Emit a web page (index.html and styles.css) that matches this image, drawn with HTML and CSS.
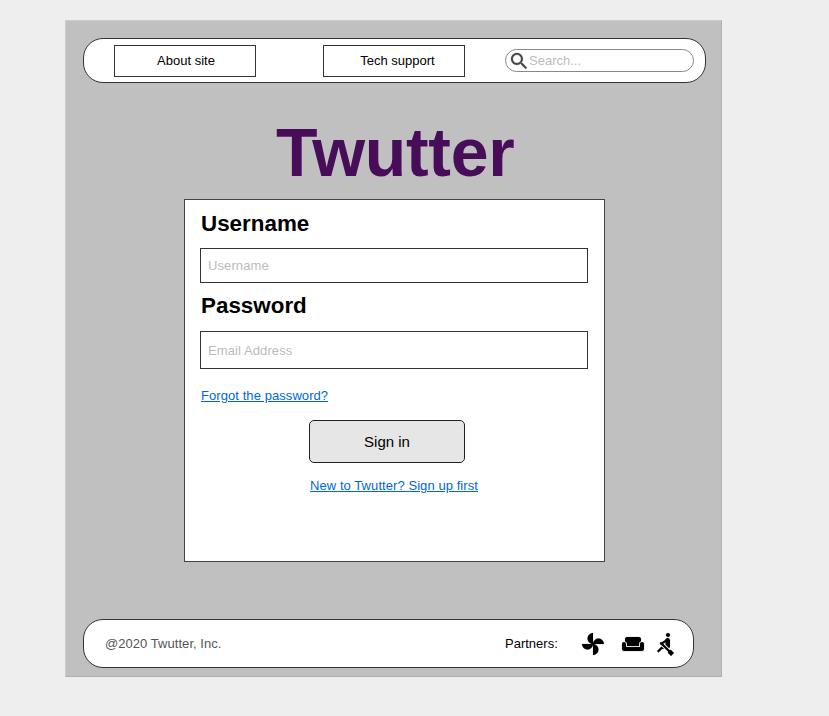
FILE: index.html
```html
<!DOCTYPE html>
<html lang="en">
<head>
<meta charset="utf-8">
<title>Twutter</title>
<link rel="stylesheet" href="styles.css">
</head>
<body>
<div class="page">
  <header class="bar header">
    <a class="nav">About site</a>
    <a class="nav">Tech support</a>
    <div class="search">
      <svg class="search-icon" viewBox="3 3 17.5 17.5"><path d="M15.5 14h-.79l-.28-.27C15.41 12.59 16 11.11 16 9.5 16 5.91 13.09 3 9.5 3S3 5.91 3 9.5 5.91 16 9.5 16c1.61 0 3.09-.59 4.23-1.57l.27.28v.79l5 4.99L20.49 19l-4.99-5zm-6 0C7.01 14 5 11.99 5 9.5S7.01 5 9.5 5 14 7.01 14 9.5 11.99 14 9.5 14z"/></svg>
      <span>Search...</span>
    </div>
  </header>
  <h1 class="title">Twutter</h1>
  <main class="card">
    <h2 class="label">Username</h2>
    <div class="field">Username</div>
    <h2 class="label label-password">Password</h2>
    <div class="field field-password">Email Address</div>
    <a class="link forgot">Forgot the password?</a>
    <button class="signin">Sign in</button>
    <a class="link signup">New to Twutter? Sign up first</a>
  </main>
  <footer class="bar footer">
    <span class="copyright">@2020 Twutter, Inc.</span>
    <span class="partners">Partners:</span>
    <svg class="icon fan" viewBox="0 0 24 24"><path d="M12 12c0-3 2.500-5.500 5.500-5.500S23 9 23 12H12zm0 0c0 3-2.500 5.500-5.500 5.500S1 15 1 12h11zm0 0c-3 0-5.500-2.500-5.500-5.500S9 1 12 1v11zm0 0c3 0 5.500 2.500 5.500 5.500S15 23 12 23V12z"/></svg>
    <svg class="icon sofa" viewBox="0 0 24 24"><path d="M21 10c-1.100 0-2 .9-2 2v3H5v-3c0-1.100-.9-2-2-2s-2 .9-2 2v5c0 1.100.9 2 2 2h18c1.100 0 2-.9 2-2v-5c0-1.100-.9-2-2-2zm-3-5H6c-1.100 0-2 .9-2 2v2.150c1.160.41 2 1.510 2 2.820V14h12v-2.030c0-1.300.84-2.400 2-2.820V7c0-1.100-.9-2-2-2z"/></svg>
    <svg class="icon rower" viewBox="0 0 24 24"><path d="M8.500 14.500L4 19l1.500 1.500L9 17h2l-2.500-2.500zM15 1c-1.100 0-2 .9-2 2s.9 2 2 2 2-.9 2-2-.9-2-2-2zm6 20.010L18 24l-2.990-3.010V19.500l-7.100-7.090c-.31.05-.61.07-.91.07v-2.160c1.660.03 3.610-.87 4.670-2.040l1.400-1.550c.19-.21.43-.38.69-.5.29-.14.62-.23.96-.23h.03C15.990 6.010 17 7.020 17 8.260v5.750c0 .84-.35 1.610-.92 2.160l-3.580-3.580v-2.270c-.63.52-1.430 1.020-2.290 1.390L16.500 18H18l3 3.010z"/></svg>
  </footer>
</div>
</body>
</html>
```
FILE: styles.css
```css
* { box-sizing: border-box; }
body {
  margin: 0;
  height: 716px;
  overflow: hidden;
  background: #eee;
  font: 13px/16px "Liberation Sans", Arial, sans-serif;
  color: #000;
}
.page {
  display: flex;
  flex-direction: column;
  width: 657px;
  height: 657px;
  margin: 20px 0 0 65px;
  padding: 17px 15px 8px 17px;
  background: #c0c0c0;
  border: 1px solid #b0b0b0;
  border-top-color: #ccc;
  border-left-color: #ccc;
}
.bar {
  display: flex;
  align-items: center;
  background: #fff;
  border: 1px solid #333;
  border-radius: 20px;
}
.header { width: 623px; height: 45px; padding-left: 30px; }
.nav {
  width: 142px;
  height: 32px;
  margin-right: 67px;
  padding-left: 2px;
  border: 1px solid #333;
  line-height: 30px;
  text-align: center;
}
.nav + .nav { padding-left: 7px; margin-right: 40px; }
.search {
  display: flex;
  align-items: center;
  width: 189px;
  height: 23px;
  padding-left: 5px;
  border: 1px solid #888;
  border-radius: 12px;
  color: #bbb;
}
.search-icon {
  width: 16px;
  height: 16px;
  margin-right: 2px;
  overflow: visible;
  fill: #444;
  stroke: #444;
  stroke-width: 0.3px;
}
.title {
  margin: 31px 0 0 193px;
  font-size: 68px;
  line-height: 76px;
  letter-spacing: -0.3px;
  color: #470d58;
}
.card {
  display: flex;
  flex-direction: column;
  width: 421px;
  height: 363px;
  margin: 9px 0 0 101px;
  padding: 11px 16px 11px 15px;
  border: 1px solid #444;
  background: #fff;
}
.label { margin: 0 0 11px 1px; font-size: 22.4px; line-height: 26px; }
.label-password { margin: 10px 0 12px 1px; }
.field {
  height: 35px;
  padding-left: 7px;
  border: 1px solid #333;
  line-height: 33px;
  letter-spacing: 0.1px;
  color: #bbb;
}
.field-password { height: 38px; line-height: 37px; }
.link { color: #0066e0; letter-spacing: 0.07px; text-decoration: underline; }
.forgot { margin: 19px auto 0 1px; }
.signin {
  width: 156px;
  height: 43px;
  margin: 16px 0 15px 109px;
  padding: 0;
  border: 1px solid #222;
  border-radius: 5px;
  background: #e6e6e6;
  font: 15px/41px "Liberation Sans", Arial, sans-serif;
  color: #000;
}
.signup { margin-left: 110px; }
.footer { width: 611px; height: 49px; margin-top: auto; padding-left: 21px; }
.copyright { width: 400px; letter-spacing: 0.05px; color: #555; }
.partners { width: 75.5px; }
.icon { width: 24px; height: 24px; stroke: #000; stroke-width: 0.15px; }
.sofa { margin-left: 16px; }
.rower { margin-left: 8px; }
```
